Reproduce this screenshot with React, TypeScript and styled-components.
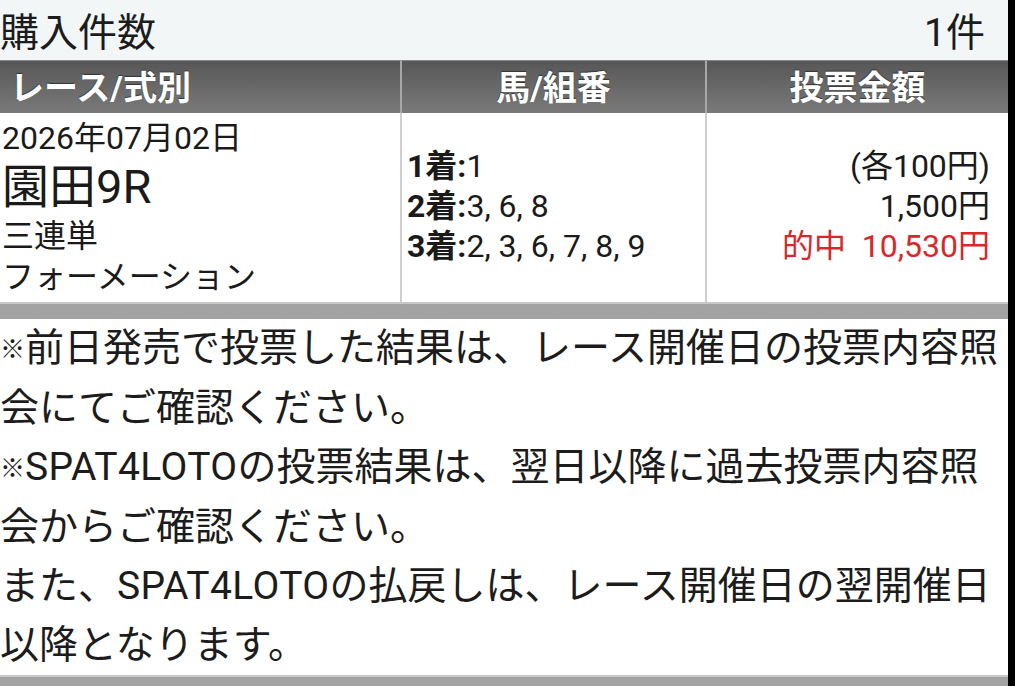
import React from "react";
import styled, { createGlobalStyle } from "styled-components";

const Global = createGlobalStyle`
  html, body {
    margin: 0;
    padding: 0;
    background: #000;
  }
  body {
    font-family: Roboto, "Noto Sans CJK JP", sans-serif;
    color: #1a1a1a;
  }
`;

const Page = styled.div`
  width: 1008px;
  min-height: 686px;
  background: #fff;
  display: flex;
  flex-direction: column;
`;

const CountBar = styled.div`
  height: 60px;
  display: flex;
  align-items: center;
  justify-content: space-between;
  padding: 0 23px 2px 0;
  background: #f2f6f6;
  font-size: 39px;
  color: #1c1c1c;
  box-sizing: border-box;
`;

const Table = styled.div`
  display: grid;
  grid-template-columns: 400px 305px 1fr;
`;

const HeadCell = styled.div<{ $align?: "left" | "center" }>`
  height: 53px;
  display: flex;
  align-items: center;
  justify-content: ${(p) => (p.$align === "left" ? "flex-start" : "center")};
  padding-left: ${(p) => (p.$align === "left" ? "10px" : "0")};
  padding-bottom: 3px;
  background: linear-gradient(#575757, #7a7a7a);
  border-top: 1px solid #8a8a8a;
  border-left: ${(p) => (p.$align === "left" ? "none" : "2px solid #a8a8a8")};
  box-sizing: border-box;
  color: #fff;
  font-weight: 700;
  font-size: 34px;
  text-shadow: 0 -1px 1px #333;
`;

const BodyCell = styled.div<{ $first?: boolean; $right?: boolean }>`
  height: 189px;
  box-sizing: border-box;
  border-left: ${(p) => (p.$first ? "none" : "2px solid #cfcfcf")};
  display: flex;
  flex-direction: column;
  justify-content: ${(p) => (p.$first ? "flex-start" : "center")};
  align-items: ${(p) => (p.$right ? "flex-end" : "flex-start")};
  padding: ${(p) => (p.$first ? "5px 0 0 2px" : p.$right ? "0 18px 4px 0" : "0 0 4px 5px")};
`;

const Line = styled.div<{ $size?: number; $height?: number; $red?: boolean }>`
  font-size: ${(p) => p.$size ?? 32}px;
  line-height: ${(p) => p.$height ?? 40}px;
  color: ${(p) => (p.$red ? "#d7282a" : "#1a1a1a")};
  white-space: pre;
`;

const Strong = styled.b`
  font-weight: 700;
`;

const Divider = styled.div<{ $height: number }>`
  height: ${(p) => p.$height}px;
  background: #a3a3a3;
  border-top: 2px solid #c8c8c8;
  box-sizing: border-box;
`;

const Notes = styled.div`
  font-size: 39px;
  line-height: 59px;
  color: #1c1c1c;
`;

const Note = styled.div`
  margin: 0;
`;

/* the note mark is set smaller than the running text, raised to its middle */
const Mark = styled.span`
  font-size: 25px;
  vertical-align: 3px;
`;

/* latin product name, slightly opened up */
const Brand = styled.span`
  letter-spacing: 0.4px;
`;

const placings = [
  { label: "1着:", value: "1" },
  { label: "2着:", value: "3, 6, 8" },
  { label: "3着:", value: "2, 3, 6, 7, 8, 9" },
];

export default function App() {
  return (
    <>
      <Global />
      <Page>
        <CountBar>
          <span>購入件数</span>
          <span>1件</span>
        </CountBar>
        <Table>
          <HeadCell $align="left">レース/式別</HeadCell>
          <HeadCell>馬/組番</HeadCell>
          <HeadCell>投票金額</HeadCell>
          <BodyCell $first>
            <Line $height={40}>2026年07月02日</Line>
            <Line $size={47} $height={57}>園田9R</Line>
            <Line $height={42}>三連単</Line>
            <Line $height={40}>フォーメーション</Line>
          </BodyCell>
          <BodyCell>
            {placings.map((p) => (
              <Line key={p.label}>
                <Strong>{p.label}</Strong>
                {p.value}
              </Line>
            ))}
          </BodyCell>
          <BodyCell $right>
            <Line>(各100円)</Line>
            <Line>1,500円</Line>
            <Line $red>的中  10,530円</Line>
          </BodyCell>
        </Table>
        <Divider $height={17} />
        <Notes>
          <Note>
            <Mark>※</Mark>前日発売で投票した結果は、レース開催日の投票内容照会にてご確認ください。
          </Note>
          <Note>
            <Mark>※</Mark>
            <Brand>SPAT4LOTO</Brand>の投票結果は、翌日以降に過去投票内容照会からご確認ください。
          </Note>
          <Note>
            また、<Brand>SPAT4LOTO</Brand>の払戻しは、レース開催日の翌開催日以降となります。
          </Note>
        </Notes>
        <Divider $height={14} />
      </Page>
    </>
  );
}
